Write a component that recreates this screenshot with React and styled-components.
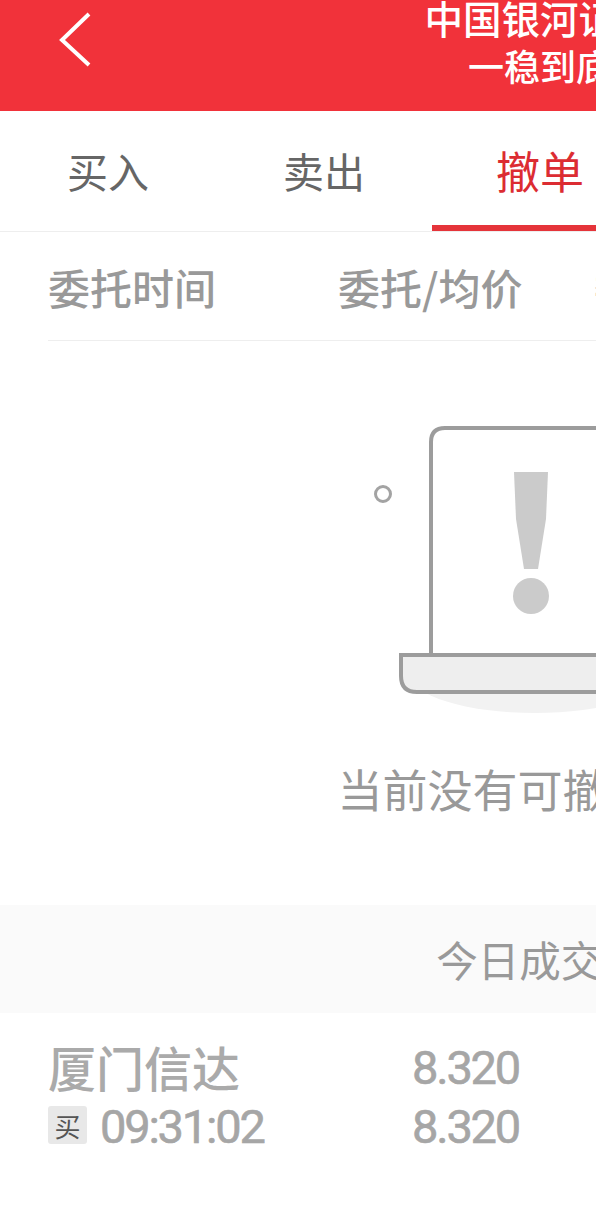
import React from 'react';
import styled, { createGlobalStyle } from 'styled-components';

const GlobalStyle = createGlobalStyle`
  html, body {
    margin: 0;
    padding: 0;
    background: #fff;
    overflow: hidden;
  }
  body {
    width: 596px;
    height: 1216px;
    font-family: "Noto Sans CJK SC", "Noto Sans", sans-serif;
  }
`;

const Viewport = styled.div`
  width: 596px;
  height: 1216px;
  overflow: hidden;
`;

const Page = styled.div`
  width: 1080px;
`;

const Header = styled.header`
  height: 111px;
  background: #f1323a;
  display: flex;
  align-items: flex-start;
  justify-content: center;
  position: relative;
  overflow: hidden;
`;

const BackIcon = styled.svg`
  position: absolute;
  left: 56px;
  top: 10px;
  width: 38px;
  height: 60px;
`;

const TitleBlock = styled.div`
  color: #fff;
  text-align: center;
  font-weight: 500;
  margin-top: -10px;
`;

const Title = styled.div`
  font-size: 38.5px;
  line-height: 54px;
`;

const SubTitle = styled.div`
  font-size: 36px;
  line-height: 42px;
`;

const Tabs = styled.nav`
  display: flex;
  height: 121px;
  box-sizing: border-box;
  border-bottom: 1px solid #eee;
`;

const Tab = styled.div`
  width: 216px;
  height: 120px;
  box-sizing: border-box;
  display: flex;
  align-items: center;
  justify-content: center;
  font-size: ${(p) => (p.$active ? '44px' : '41px')};
  color: ${(p) => (p.$active ? '#dc2c32' : '#666')};
  border-bottom: ${(p) => (p.$active ? '6px solid #e5343a' : 'none')};
  padding-top: ${(p) => (p.$active ? '3px' : '0')};
  padding-bottom: ${(p) => (p.$active ? '0' : '2px')};
`;

const ColumnHead = styled.div`
  display: flex;
  margin-left: 48px;
  height: 109px;
  box-sizing: border-box;
  border-bottom: 1px solid #eee;
  align-items: center;
  font-size: 42px;
  font-weight: 500;
  color: #999;
`;

const HeadCell = styled.div`
  width: ${(p) => p.$w}px;
  flex: none;
`;

const Empty = styled.section`
  height: 564px;
  display: flex;
  flex-direction: column;
  align-items: center;
`;

const Illustration = styled.svg`
  width: 360px;
  height: 310px;
  margin-top: 73px;
  flex: none;
`;

const EmptyText = styled.div`
  font-size: 45px;
  line-height: 60px;
  color: #999;
  margin-top: 35px;
`;

const Band = styled.div`
  height: 108px;
  background: #fafafa;
  display: flex;
  align-items: center;
  justify-content: center;
  font-size: 41.5px;
  color: #999;
`;

const OrderRow = styled.div`
  display: flex;
  margin-left: 48px;
  padding-top: 23px;
`;

const NameCol = styled.div`
  width: 364px;
  flex: none;
`;

const StockName = styled.div`
  font-size: 48px;
  line-height: 60px;
  color: #aaa;
  font-weight: 500;
`;

const TimeLine = styled.div`
  display: flex;
  align-items: center;
  height: 58px;
  gap: 13px;
`;

const Badge = styled.span`
  width: 39px;
  height: 38px;
  background: #e8e8e8;
  border-radius: 3px;
  color: #555;
  font-size: 26px;
  display: flex;
  align-items: center;
  justify-content: center;
`;

const Digits = styled.span`
  font-family: Roboto, "Liberation Sans", sans-serif;
  font-size: 47px;
  font-weight: 400;
  letter-spacing: -2.2px;
  color: #a6a6a6;
  -webkit-text-stroke: 0.6px #a6a6a6;
  padding-top: 3px;
`;

const PriceCol = styled.div`
  display: flex;
  flex-direction: column;
`;

const PriceLine = styled.div`
  height: 59px;
  display: flex;
  align-items: center;
`;

export default function App() {
  return (
    <Viewport>
      <GlobalStyle />
      <Page>
        <Header>
          <BackIcon viewBox="0 0 38 60">
            <path d="M33 4 L6 30 L33 55" fill="none" stroke="#fff" strokeWidth="4" />
          </BackIcon>
          <TitleBlock>
            <Title>中国银河证券</Title>
            <SubTitle>一稳到底</SubTitle>
          </TitleBlock>
        </Header>
        <Tabs>
          <Tab>买入</Tab>
          <Tab>卖出</Tab>
          <Tab $active>撤单</Tab>
        </Tabs>
        <ColumnHead>
          <HeadCell $w={290}>委托时间</HeadCell>
          <HeadCell $w={256}>委托/均价</HeadCell>
          <HeadCell $w={200}>委托/成交</HeadCell>
        </ColumnHead>
        <Empty>
          <Illustration viewBox="0 0 360 310">
            <ellipse cx="175" cy="260" rx="125" ry="39" fill="#f2f2f2" />
            <circle cx="23" cy="80" r="7.5" fill="none" stroke="#a3a3a3" strokeWidth="3" />
            <path d="M71 240 V28 Q71 14 85 14 H257 Q271 14 271 28 V240" fill="#fff" stroke="#9c9c9c" strokeWidth="4" />
            <path d="M41 241 H301 V262 Q301 278 285 278 H57 Q41 278 41 262 Z" fill="#eeeeee" stroke="#9c9c9c" strokeWidth="4" />
            <path d="M154 58 H188 L186 105 L178 155 H164 L156 105 Z" fill="#cbcbcb" />
            <circle cx="171" cy="182" r="18" fill="#cbcbcb" />
          </Illustration>
          <EmptyText>当前没有可撤的委托</EmptyText>
        </Empty>
        <Band>今日成交额</Band>
        <OrderRow>
          <NameCol>
            <StockName>厦门信达</StockName>
            <TimeLine>
              <Badge>买</Badge>
              <Digits>09:31:02</Digits>
            </TimeLine>
          </NameCol>
          <PriceCol>
            <PriceLine><Digits>8.320</Digits></PriceLine>
            <PriceLine><Digits>8.320</Digits></PriceLine>
          </PriceCol>
        </OrderRow>
      </Page>
    </Viewport>
  );
}
